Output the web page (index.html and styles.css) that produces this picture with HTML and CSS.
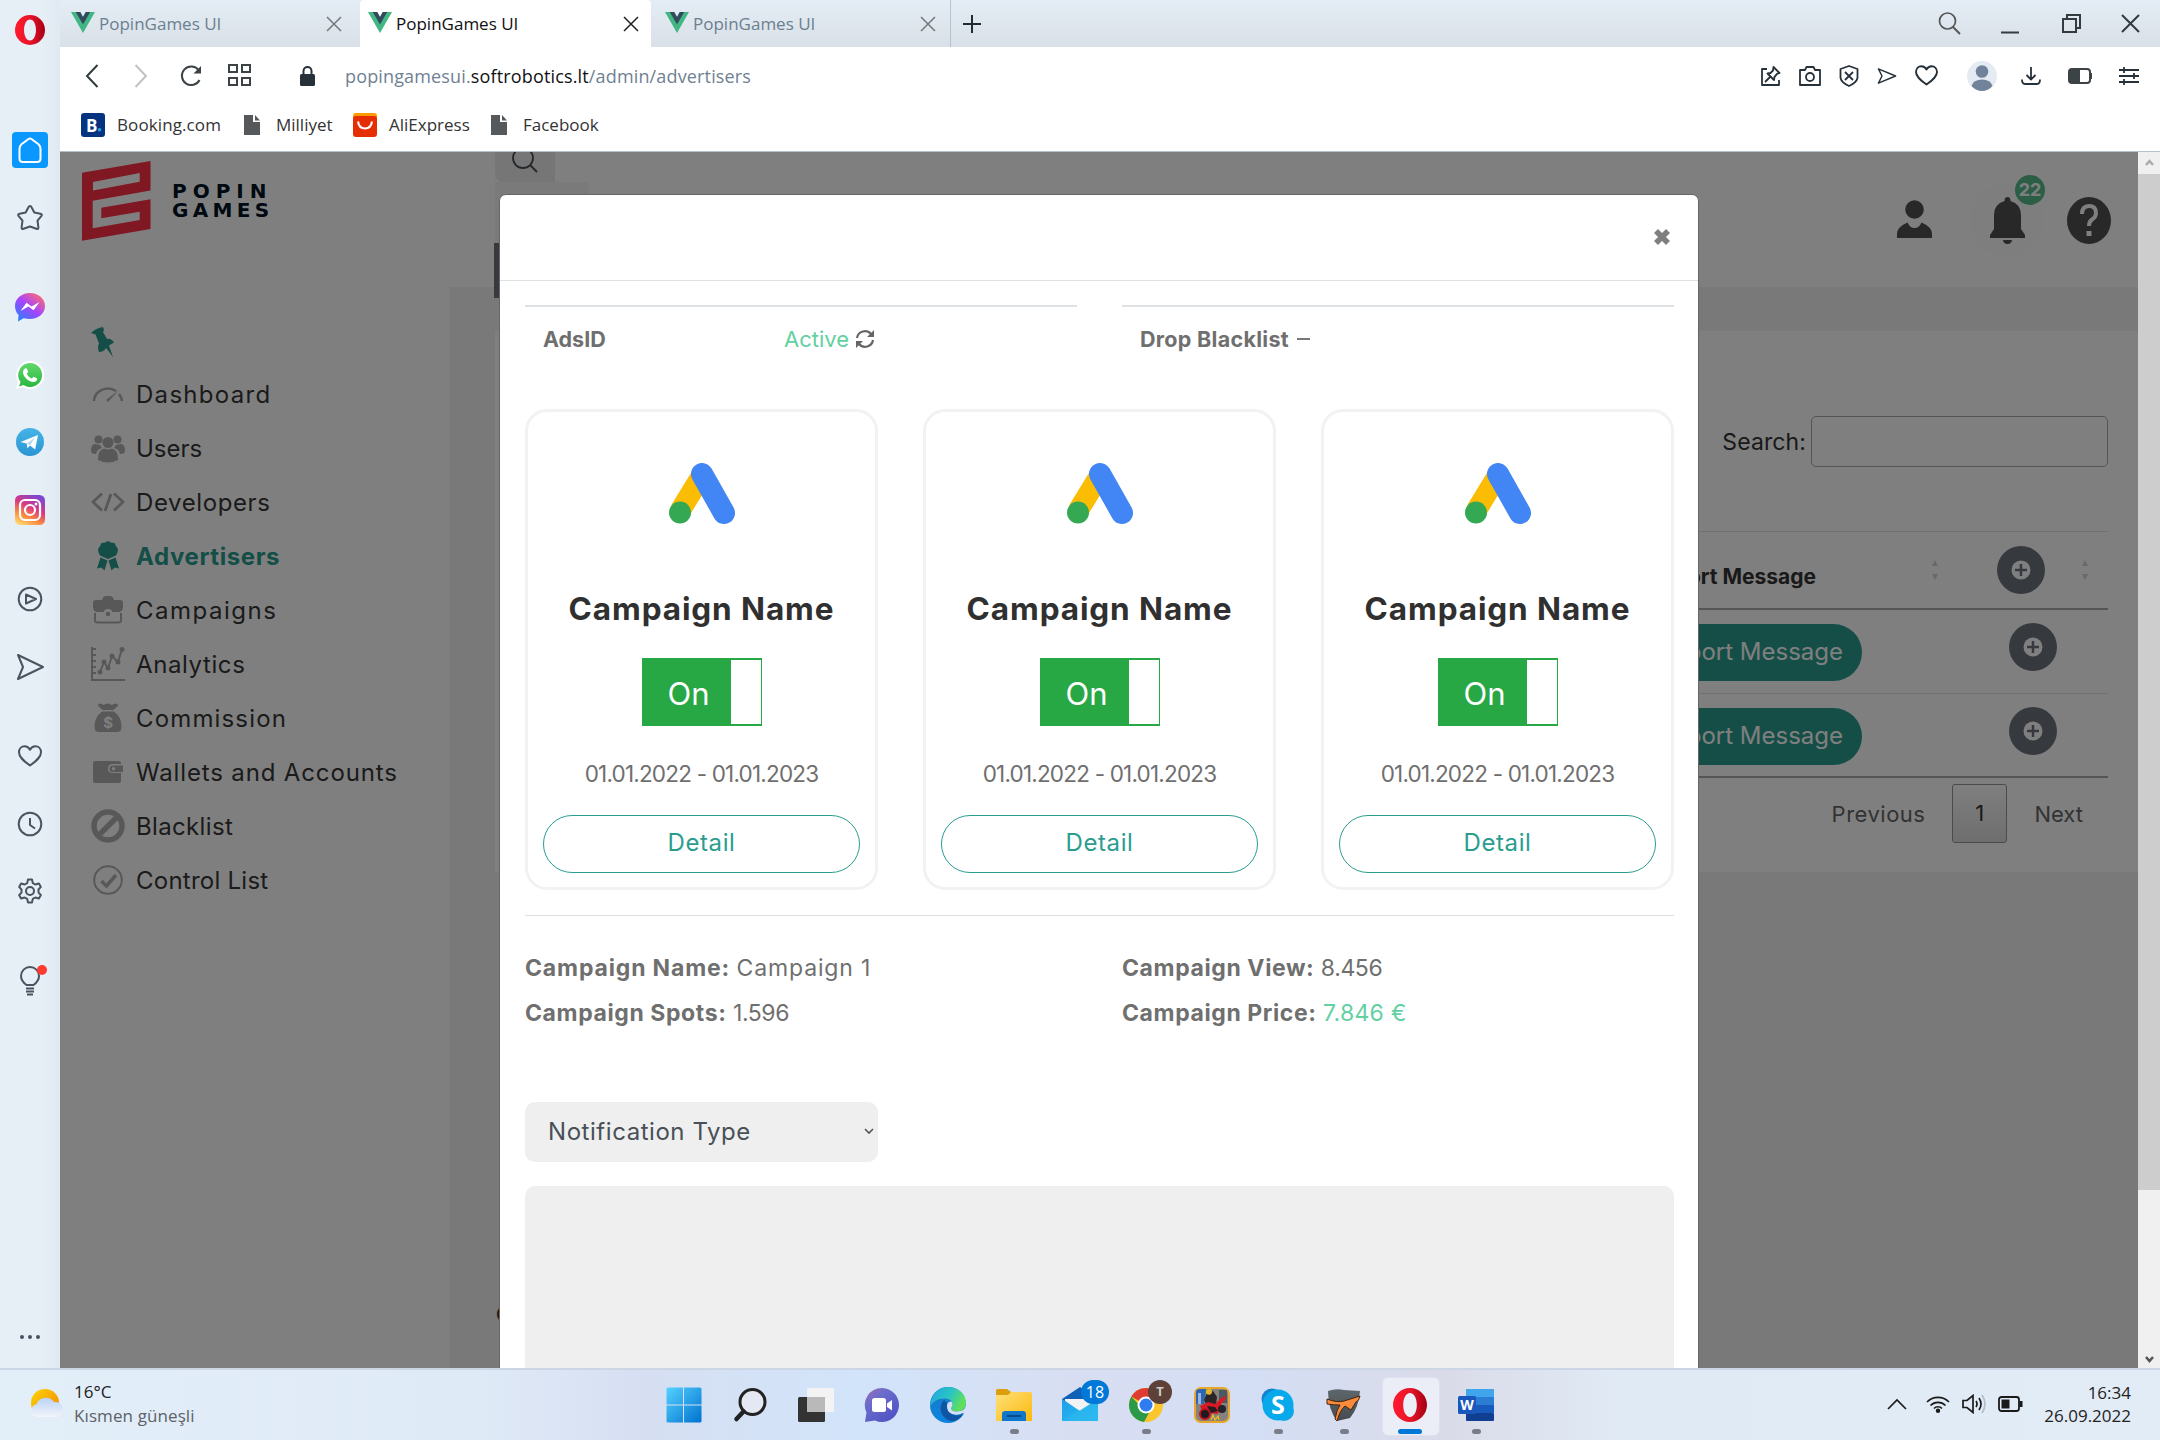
FILE: index.html
```html
<!DOCTYPE html>
<html lang="tr">
<head>
<meta charset="utf-8">
<title>PopinGames UI</title>
<link rel="stylesheet" href="styles.css">
</head>
<body>
<svg class="defs" width="0" height="0">
  <defs>
    <linearGradient id="opera-a" x1="0" x2="1"><stop offset="0" stop-color="#ff1b2d"/><stop offset=".5" stop-color="#e8142a"/><stop offset="1" stop-color="#a70014"/></linearGradient>
    <linearGradient id="msg" x1="0" y1="1" x2=".8" y2="0"><stop offset="0" stop-color="#0f8cff"/><stop offset=".55" stop-color="#a544ff"/><stop offset="1" stop-color="#ff6b74"/></linearGradient>
    <linearGradient id="wa" x2="0" y2="1"><stop offset="0" stop-color="#61d86b"/><stop offset="1" stop-color="#2bb741"/></linearGradient>
    <linearGradient id="tg" x2="0" y2="1"><stop offset="0" stop-color="#45b4e6"/><stop offset="1" stop-color="#2b95d3"/></linearGradient>
    <linearGradient id="ig" x1=".2" y1="1" x2=".7" y2="0"><stop offset="0" stop-color="#ffd86e"/><stop offset=".3" stop-color="#fb8a3e"/><stop offset=".6" stop-color="#dd3880"/><stop offset="1" stop-color="#7a46d4"/></linearGradient>
    <linearGradient id="win" x2="1" y2="1"><stop offset="0" stop-color="#55d2ff"/><stop offset="1" stop-color="#0072d0"/></linearGradient>
    <linearGradient id="chat" x2=".8" y2="1"><stop offset="0" stop-color="#a06bb0"/><stop offset=".35" stop-color="#6c6ccc"/><stop offset="1" stop-color="#4d52c4"/></linearGradient>
    <linearGradient id="edge-t" x2="1" y2=".4"><stop offset="0" stop-color="#1ea5e8"/><stop offset=".6" stop-color="#2cc5c0"/><stop offset="1" stop-color="#5fe05a"/></linearGradient>
    <linearGradient id="edge-b" x2="0" y2="1"><stop offset="0" stop-color="#1b79c8"/><stop offset="1" stop-color="#0c84dd"/></linearGradient>
    <linearGradient id="fold" x2="1" y2="1"><stop offset="0" stop-color="#ffe07a"/><stop offset="1" stop-color="#fbb90c"/></linearGradient>
    <linearGradient id="sun" x2="1" y2="1"><stop offset="0" stop-color="#ffd400"/><stop offset="1" stop-color="#ef8300"/></linearGradient>
    <linearGradient id="cloud" x2="0" y2="1"><stop offset="0" stop-color="#b9d2f5"/><stop offset="1" stop-color="#f3f5f9"/></linearGradient>
    <linearGradient id="sky" x2="1" y2="1"><stop offset="0" stop-color="#1b9fe8"/><stop offset="1" stop-color="#2dbdf2"/></linearGradient>
    <linearGradient id="shield" x2="0" y2="1"><stop offset="0" stop-color="#5d676b"/><stop offset="1" stop-color="#474b4f"/></linearGradient>
    <symbol id="vue" viewBox="0 0 24 21"><path d="M0 0h9.2L12 4.9 14.800 0H24L12 21z" fill="#41b883"/><path d="M4.800 0h4.400L12 4.900 14.800 0h4.400L12 12.500z" fill="#35495e"/></symbol>
    <symbol id="x" viewBox="0 0 16 16"><path d="M1 1l14 14M15 1L1 15" fill="none" stroke="currentColor" stroke-width="1.500"/></symbol>
    <symbol id="opera" viewBox="0 0 30 30"><path fill="url(#opera-a)" fill-rule="evenodd" d="M15 0a15 15 0 1 0 0 30a15 15 0 1 0 0-30zM15 4.500c3.600 0 6 4.700 6 10.500s-2.400 10.500-6 10.500S9 20.800 9 15s2.400-10.500 6-10.500z"/></symbol>
    <symbol id="ads" viewBox="0 0 66 61"><path d="M11 48L33 12" stroke="#fbbc04" stroke-width="21"/><path d="M33 11L55 50" stroke="#4285f4" stroke-width="22" stroke-linecap="round"/><circle cx="11" cy="49.500" r="11" fill="#34a853"/></symbol>
    <symbol id="plus" viewBox="0 0 48 48"><circle cx="24" cy="24" r="24" fill="#6c757d"/><circle cx="24" cy="24" r="9.500" fill="#fff"/><path d="M24 18v12M18 24h12" stroke="#6c757d" stroke-width="2.500"/></symbol>
    <symbol id="sort" viewBox="0 0 8 20"><path d="M4 0l3 6H1zM4 20l3-6H1z" fill="#d2d2d2"/></symbol>
    <symbol id="send" viewBox="0 0 28 24"><path d="M2 2l24 10L2 22l5-10z" fill="none" stroke="currentColor" stroke-width="2" stroke-linejoin="round"/></symbol>
    <symbol id="heart" viewBox="0 0 24 22"><path d="M12 20.500C5 15.500 1 12 1 7.300 1 3.800 3.500 1.300 6.600 1.300c2.300 0 4.200 1.200 5.400 3.400 1.200-2.200 3.100-3.400 5.400-3.400 3.100 0 5.600 2.500 5.600 6 0 4.700-4 8.200-11 13.200z" fill="none" stroke="currentColor" stroke-width="2" stroke-linejoin="round"/></symbol>
  </defs>
</svg>

<div class="screen">
  <aside class="opera-bar">
    <svg class="o-ico" viewBox="-3 -3 36 36"><use href="#opera" width="30" height="30"/></svg>
    <svg class="o-ico gap-home" viewBox="0 0 36 36"><rect width="36" height="36" rx="4" fill="#0a98ff"/><path d="M7.500 17q0-3 2-4.700l7-5.300q1.500-1 3 0l7 5.300q2 1.700 2 4.700v9.500q0 3.500-3.500 3.500H11q-3.500 0-3.500-3.500z" fill="none" stroke="#fff" stroke-width="2"/></svg>
    <svg class="o-ico gap-s" viewBox="0 0 36 36"><path d="M18 6q1 0 1.700 1.500l2.600 5 6 1.200q2.500.6 1 2.500l-3.800 4.500.9 6.600q.1 2.300-2 1.500L18 26.500l-6.400 2.300q-2.100.8-2-1.500l.9-6.600-3.800-4.500q-1.500-1.900 1-2.500l6-1.200 2.600-5Q17 6 18 6z" class="o-line"/></svg>
    <svg class="o-ico gap-l" viewBox="0 0 36 36"><path d="M18 4C9.500 4 3 9.600 3 17c0 3.600 1.300 6.700 3.600 9L6 32.500l5.600-3.300q3 .8 6.400.8c8.500 0 15-5.600 15-13S26.500 4 18 4z" fill="url(#msg)"/><path d="M8.500 22l6-8.300 5 3.700 8-4.400-6 8.300-5-3.800z" fill="#fff"/></svg>
    <svg class="o-ico gap-s" viewBox="0 0 36 36"><path d="M18 4a14 14 0 1 1-7 26l-7 2 2-7A14 14 0 0 1 18 4z" fill="#fff"/><path d="M18 6a12 12 0 1 1-6.500 22L7 29.500 8.500 25A12 12 0 0 1 18 6z" fill="url(#wa)"/><path d="M13 11.500q1.500-1 2.200.8l1 2.400-1.500 2q1.800 3.500 5 4.800l2-1.800 3.300 1.600c.8 3-2.500 4.200-4.500 3.700-5-1.200-8.600-4.900-9.500-9-.2-2 .7-3.600 2-4.500z" fill="#fff"/></svg>
    <svg class="o-ico gap-s" viewBox="0 0 36 36"><circle cx="18" cy="18" r="14" fill="url(#tg)"/><path d="M8.500 18L26 11l-2.800 14.500-5.200-4-2.500 2.800-.8-4.800z" fill="#fff"/><path d="M14.700 19.500l8.300-6-5 8" fill="#b9d9ee"/></svg>
    <svg class="o-ico gap-s" viewBox="0 0 36 36"><rect x="3" y="3" width="30" height="30" rx="5.500" fill="url(#ig)"/><rect x="8" y="8" width="20" height="20" rx="5" fill="none" stroke="#fff" stroke-width="2.200"/><circle cx="18" cy="18" r="5" fill="none" stroke="#fff" stroke-width="2.200"/><circle cx="24" cy="12" r="1.500" fill="#fff"/></svg>
    <svg class="o-ico gap-l" viewBox="0 0 36 36"><circle cx="18" cy="18" r="11.300" class="o-line"/><path d="M14 13.500l10 4.500-10 4.500z" class="o-line"/></svg>
    <svg class="o-ico gap-s" viewBox="0 0 36 36"><path d="M6 6l25 12L6 30l5-12z" class="o-line"/></svg>
    <svg class="o-ico gap-l" viewBox="-6 -7 36 36"><use href="#heart" width="24" height="22"/></svg>
    <svg class="o-ico gap-s" viewBox="0 0 36 36"><circle cx="18" cy="18" r="11.300" class="o-line"/><path d="M18 12v7l5 3.500" class="o-line"/></svg>
    <svg class="o-ico gap-s" viewBox="0 0 36 36"><path d="M16 6.500h4l.8 3.600 2.500 1.400 3.600-1 2 3.400-2.400 2.600v3l2.400 2.600-2 3.400-3.600-1-2.500 1.400-.8 3.600h-4l-.8-3.600-2.500-1.400-3.600 1-2-3.400 2.400-2.600v-3l-2.400-2.600 2-3.400 3.600 1 2.500-1.400z" class="o-line"/><circle cx="18" cy="18" r="4" class="o-line"/></svg>
    <svg class="o-ico gap-l" viewBox="0 0 36 36"><path d="M14.500 22q-5.500-4-5.500-9a9 9 0 0 1 18 0q0 5-5.500 9z" class="o-line"/><path d="M14 25.500h8M14 28.500h8M15 31.500h6" class="o-line"/><circle cx="30" cy="7" r="5" fill="#ff3b30"/></svg>
    <svg class="o-ico gap-dots" viewBox="0 0 36 36"><g fill="#4a5360"><circle cx="10" cy="18" r="2"/><circle cx="18" cy="18" r="2"/><circle cx="26" cy="18" r="2"/></g></svg>
  </aside>

  <header class="tabs">
    <div class="tab"><svg class="vue"><use href="#vue"/></svg><span>PopinGames UI</span><svg class="tab-x"><use href="#x"/></svg></div>
    <div class="tab active"><svg class="vue"><use href="#vue"/></svg><span>PopinGames UI</span><svg class="tab-x"><use href="#x"/></svg></div>
    <div class="tab"><svg class="vue"><use href="#vue"/></svg><span>PopinGames UI</span><svg class="tab-x"><use href="#x"/></svg></div>
    <svg class="new-tab" viewBox="0 0 18 18"><path d="M9 0v18M0 9h18" stroke="#222c30" stroke-width="2"/></svg>
    <div class="win-buttons">
      <svg width="23" height="23" viewBox="0 0 23 23"><circle cx="9.500" cy="9" r="8" fill="none" stroke="#555" stroke-width="1.700"/><path d="M15 15l7 7" stroke="#555" stroke-width="1.900"/></svg>
      <svg width="18" height="20" viewBox="0 0 18 20"><path d="M0 18.500h18" stroke="#333b3f" stroke-width="2"/></svg>
      <svg width="19" height="19" viewBox="0 0 19 19"><path d="M1 5h13v13H1zM5 5V1h13v13h-4" fill="none" stroke="#333b3f" stroke-width="2"/></svg>
      <svg width="19" height="19" viewBox="0 0 19 19"><path d="M1 1l17 17M18 1L1 18" stroke="#333b3f" stroke-width="2"/></svg>
    </div>
  </header>

  <section class="toolbar">
    <div class="address">
      <svg class="nav-back" width="14" height="24" viewBox="0 0 14 24"><path d="M12.500 1L2 12l10.500 11" fill="none" stroke="#333b3f" stroke-width="2"/></svg>
      <svg class="nav-fwd" width="14" height="24" viewBox="0 0 14 24"><path d="M1.500 1L12 12 1.500 23" fill="none" stroke="#bfc3c5" stroke-width="2"/></svg>
      <svg class="nav-reload" width="22" height="22" viewBox="0 0 22 22"><path d="M18.500 5A9.300 9.300 0 1 0 19.500 15" fill="none" stroke="#3c4347" stroke-width="2"/><path d="M21 1v7.500h-7.500z" fill="#3c4347"/></svg>
      <svg class="nav-grid" width="23" height="23" viewBox="0 0 23 23"><path d="M1 1h8v7H1zM14 1h8v7h-8zM1 14h8v7H1zM14 14h8v7h-8z" fill="none" stroke="#3c4347" stroke-width="2"/></svg>
      <svg class="lock" width="15" height="20" viewBox="0 0 15 20"><rect y="8" width="15" height="12" rx="1.500" fill="#26313a"/><path d="M3.500 9V5a4 4 0 0 1 8 0v4" fill="none" stroke="#26313a" stroke-width="2"/></svg>
      <span class="url">popingamesui.<b>softrobotics.lt</b>/admin/advertisers</span>
      <div class="tools">
        <svg width="20" height="20" viewBox="0 0 20 20" class="t-line"><path d="M6 3H1v16h17v-5" /><path d="M12.500 1l6 6-2.500.8-2.500 3-.5 3.200-6.500-6.500 3-.5 2.500-2.500zM9 11l-5 5"/></svg>
        <svg width="22" height="20" viewBox="0 0 22 20" class="t-line"><path d="M1 4h5l1.500-3h7L16 4h5v15H1z"/><circle cx="11" cy="11" r="4"/></svg>
        <svg width="20" height="22" viewBox="0 0 20 22" class="t-line"><path d="M10 1l8.500 3v9q-1 4.500-8.500 8-7.500-3.500-8.500-8V4z"/><path d="M6 7l8 8M14 7l-8 8"/></svg>
        <svg width="20" height="20" class="c-dark"><use href="#send"/></svg>
        <svg width="23" height="21" class="c-dark"><use href="#heart"/></svg>
        <svg class="avatar" width="30" height="30" viewBox="0 0 30 30"><circle cx="15" cy="15" r="15" fill="#e4ebf3"/><circle cx="15" cy="10.500" r="6.300" fill="#71839a"/><path d="M4.500 25Q6.500 18.500 15 18.500T25.500 25Q21 30 15 30T4.500 25z" fill="#71839a"/></svg>
        <svg width="20" height="18" viewBox="0 0 20 18" class="t-line"><path d="M10 0v12M5.500 8l4.500 4.500L14.500 8M1 12.500q0 4.500 3 4.500h12q3 0 3-4.500"/></svg>
        <svg width="24" height="16" viewBox="0 0 24 16"><rect x="1" y="1" width="21" height="14" rx="3" fill="none" stroke="#3c4347" stroke-width="2"/><rect x="1" y="1" width="11" height="14" fill="#3c4347"/><path d="M23 5v6" stroke="#3c4347" stroke-width="2"/></svg>
        <svg width="20" height="18" viewBox="0 0 20 18" class="t-line"><path d="M0 3h20M0 9h20M0 15h20M5 0v6M15 6v6M5 12v6"/></svg>
      </div>
    </div>
    <nav class="bookmarks">
      <svg width="24" height="24" viewBox="0 0 24 24"><rect width="24" height="24" rx="3" fill="#063380"/><text x="5" y="18.500" class="bk-b">B</text><circle cx="18.500" cy="16.800" r="1.800" fill="#1fa4e8"/></svg><span class="bm-1">Booking.com</span>
      <svg width="16" height="20" viewBox="0 0 16 20"><path d="M0 0h9v7h7v13H0zM11 0l5 5.500h-5z" fill="#55595b"/></svg><span class="bm-2">Milliyet</span>
      <svg width="24" height="24" viewBox="0 0 24 24"><rect width="24" height="20" rx="3" fill="#ff9900"/><rect y="3" width="24" height="21" rx="3" fill="#e62e04"/><path d="M5 8.500q1 7 7 7t7-7" fill="none" stroke="#fff" stroke-width="2"/></svg><span class="bm-3">AliExpress</span>
      <svg width="16" height="20" viewBox="0 0 16 20"><path d="M0 0h9v7h7v13H0zM11 0l5 5.500h-5z" fill="#55595b"/></svg><span class="bm-4">Facebook</span>
    </nav>
  </section>

  <main class="viewport">
    <div class="app">
      <aside class="side">
        <div class="brand">
          <svg width="69" height="80" viewBox="0 0 69 80"><path fill="#ff3146" fill-rule="evenodd" d="M0 11.700L68.500 0v29.500L10.700 39.700v27.600L57.700 59v-8.300L19.300 57.300V46.700L68.500 38.300V68L0 79.700zM11 21v8.500l46.700-8.800V12z"/></svg>
          <div class="brand-text"><div class="b1">POPIN</div><div>GAMES</div></div>
        </div>
        <svg class="pin" viewBox="0 0 24 30"><path d="M0 6Q5 1 12 0l1 3-1 2 4 7q4-1 7 3.500l-5 3 4 11.500-7-9q-2 4-7 4-2-5 0-8.500L4.500 7.500z" fill="#2a9d8f"/></svg>
        <ul class="menu">
          <li><svg viewBox="0 0 34 34"><path d="M3 24A14 13 0 0 1 25 14M28 17q2.500 3 3 7" fill="none" stroke="currentColor" stroke-width="2.500"/><path d="M28 13L17 25l-2-2z" fill="currentColor"/></svg>Dashboard</li>
          <li><svg viewBox="0 0 34 34" fill="currentColor"><circle cx="17" cy="11.500" r="5.500"/><circle cx="7.500" cy="8.500" r="4"/><circle cx="26.500" cy="8.500" r="4"/><path d="M7 29q0-11 6.500-11.500 3.500 1.800 7 0Q27 18 27 29q-10 5-20 0zM0 20q0-7 4-7l5 1 2 3q-5 1-6 6-5 0-5-3zM34 20q0-7-4-7l-5 1-2 3q5 1 6 6 5 0 5-3z"/></svg>Users</li>
          <li><svg viewBox="0 0 34 34"><path d="M11 8.500L2 17l9 8.500M23 8.500l9 8.500-9 8.500M20 9l-6 17" fill="none" stroke="currentColor" stroke-width="2.800"/></svg>Developers</li>
          <li class="on"><svg viewBox="0 0 34 34" fill="currentColor"><path d="M17 2l3 1.500 3.500.5 1.500 3 2 3-.5 3.500-1.500 3-3.500 1.500L17 20l-4.500-2L9 16.500l-1.500-3L7 10l2-3 1.500-3 3.500-.5zM9.500 18.500l7 3-3 10-3-3-4.500 1zM24.500 18.500l-7 3 3 10 3-3 4.500 1z"/></svg>Advertisers</li>
          <li><svg viewBox="0 0 34 34"><path d="M2 10q0-3 3-3h6q1-4 4-4h4q3 0 4 4h6q3 0 3 3v4q0 5-5 5h-6q0-3-4-3t-4 3H7q-5 0-5-5z" fill="currentColor"/><path d="M4 20v7q0 2.500 2.500 2.500h21Q30 29.500 30 27v-7" fill="none" stroke="currentColor" stroke-width="2"/><circle cx="17" cy="21" r="2.300" fill="currentColor"/></svg>Campaigns</li>
          <li><svg viewBox="0 0 34 34"><path d="M1 0v33h33M1 2h4M1 8h4M1 14h4M1 20h4M1 26h4M9 25l4-10 4 6 4-12 6 6 4-13" fill="none" stroke="currentColor" stroke-width="2"/><g fill="currentColor"><circle cx="9" cy="25" r="2.500"/><circle cx="13" cy="15" r="2.500"/><circle cx="17" cy="21" r="2.500"/><circle cx="21" cy="9" r="2.500"/><circle cx="27" cy="15" r="2.500"/><circle cx="31" cy="2.500" r="2.500"/></g></svg>Analytics</li>
          <li><svg viewBox="0 0 34 34" fill="currentColor"><path d="M6.500 4q3-3 6 0 4-3 8.500 0 3-3 6.500 0l-5 5h-11zM11 10.500h12q8 6 7.500 15.500 0 5-4.500 5H8q-4.500 0-4.500-5Q3 16.500 11 10.500z"/><text x="12.300" y="27" font-size="15" font-weight="700" fill="#fff">$</text></svg>Commission</li>
          <li><svg viewBox="0 0 34 34" fill="currentColor"><path d="M2 8q0-2 2-2h23q3 0 3 2v1h-8q-5 0-5 4.500T22 18h8v8q0 2-2 2H4q-2 0-2-2z"/><path fill-rule="evenodd" d="M22 10.500h10V17H22q-3.500 0-3.500-3.200t3.500-3.300zm.5 1.600a1.700 1.700 0 1 0 .1 3.400 1.700 1.700 0 0 0-.1-3.400z"/></svg>Wallets and Accounts</li>
          <li><svg viewBox="0 0 34 34"><circle cx="17" cy="17" r="14" fill="none" stroke="currentColor" stroke-width="5.500"/><path d="M8 26L26 8" stroke="currentColor" stroke-width="5.500"/></svg>Blacklist</li>
          <li><svg viewBox="0 0 34 34"><circle cx="17" cy="17" r="13.800" fill="none" stroke="currentColor" stroke-width="2"/><path d="M10.500 18l5 5L25 12" fill="none" stroke="currentColor" stroke-width="3.500"/></svg>Control List</li>
        </ul>
      </aside>
      <div class="content">
        <div class="top">
          <div class="top-left">
            <div class="find"><svg width="26" height="26" viewBox="0 0 26 26"><circle cx="11" cy="11" r="10" fill="none" stroke="#495057" stroke-width="1.800"/><path d="M18 18l7 7" stroke="#495057" stroke-width="2"/></svg></div>
            <div class="find-tail"></div>
            <div class="dark-btn"></div>
          </div>
          <div class="top-icons">
            <svg class="u" viewBox="0 0 35 38" fill="#505050"><circle cx="17.500" cy="9.500" r="9.300"/><path d="M0 38v-4q0-7 10.500-11.500Q13 28 17.500 28t7-5.500Q35 27 35 34v4z"/></svg>
            <div class="bell"><svg viewBox="0 0 35 47" fill="#505050"><path d="M14.500 4q0-4 3-4t3 4Q31 7 31 18v14l4 6v3H0v-3l4-6V18Q4 7 14.500 4zM13 43h9q-.5 4-4.500 4T13 43z"/></svg><span class="badge">22</span></div>
            <svg class="q" viewBox="0 0 44 47"><ellipse cx="22" cy="23.500" rx="22" ry="23.500" fill="#505050"/><path d="M15 17q0-8 7-8t7 7q0 4-4 6.500-3 2-3 6.500" fill="none" stroke="#fff" stroke-width="4"/><rect x="19.500" y="34" width="5" height="5" fill="#fff"/></svg>
          </div>
        </div>
        <div class="panel">
          <label class="search">Search:<span class="search-box"></span></label>
          <div class="thead"><span class="th">Support Message</span><svg class="sort s1"><use href="#sort"/></svg><svg class="plus"><use href="#plus"/></svg><svg class="sort s2"><use href="#sort"/></svg></div>
          <div class="trow"><span class="pill">Support Message</span><svg class="plus"><use href="#plus"/></svg></div>
          <div class="trow last"><span class="pill">Support Message</span><svg class="plus"><use href="#plus"/></svg></div>
          <div class="pager"><span>Previous</span><span class="cur">1</span><span class="next">Next</span></div>
        </div>
        <div class="foot">©</div>
      </div>
    </div>
    <div class="shade"></div>
    <div class="modal">
      <div class="m-head"><svg width="18" height="18" viewBox="0 0 18 18"><path d="M3 3l12 12M15 3L3 15" stroke="#7f7f7f" stroke-width="5.600"/></svg></div>
      <div class="m-body">
        <div class="two">
          <div class="bar"><b class="ads-id">AdsID</b><span class="active-t">Active</span><svg width="20" height="20" viewBox="0 0 20 20"><path d="M2 9a8 8 0 0 1 14-4M18 11a8 8 0 0 1-14 4" fill="none" stroke="#666" stroke-width="2.200"/><path d="M19 1v7h-7zM1 19v-7h7z" fill="#666"/></svg></div>
          <div class="bar"><b class="drop">Drop Blacklist</b><i class="dash"></i></div>
        </div>
        <div class="cards">
          <article class="card"><svg class="ads"><use href="#ads"/></svg><h3>Campaign Name</h3><div class="toggle"><span>On</span><i></i></div><p>01.01.2022 - 01.01.2023</p><div class="detail">Detail</div></article>
          <article class="card"><svg class="ads"><use href="#ads"/></svg><h3>Campaign Name</h3><div class="toggle"><span>On</span><i></i></div><p>01.01.2022 - 01.01.2023</p><div class="detail">Detail</div></article>
          <article class="card"><svg class="ads"><use href="#ads"/></svg><h3>Campaign Name</h3><div class="toggle"><span>On</span><i></i></div><p>01.01.2022 - 01.01.2023</p><div class="detail">Detail</div></article>
        </div>
        <div class="info">
          <div><b class="wide">Campaign Name:</b> <span class="wide">Campaign 1</span></div><div><b>Campaign View:</b> <span class="num">8.456</span></div>
          <div><b>Campaign Spots:</b> <span class="num">1.596</span></div><div><b>Campaign Price:</b> <span class="green">7.846 €</span></div>
        </div>
        <div class="select">Notification Type<svg width="10" height="7" viewBox="0 0 10 7"><path d="M1 1l4 4 4-4" fill="none" stroke="#555" stroke-width="1.600"/></svg></div>
        <div class="area"></div>
      </div>
    </div>
    <div class="scroll"><svg width="22" height="22" viewBox="0 0 22 22"><path d="M8 13l3.500-4 3.500 4" fill="none" stroke="#a9a9a9" stroke-width="2.400"/></svg><div class="thumb"></div><svg width="22" height="18" viewBox="0 0 22 18"><path d="M8 7l3.500 4L15 7" fill="none" stroke="#555" stroke-width="2.600"/></svg></div>
  </main>

  <footer class="taskbar">
    <div class="weather">
      <svg width="34" height="30" viewBox="0 0 34 30"><circle cx="15" cy="14" r="14" fill="url(#sun)"/><path d="M7 28a6.500 6.500 0 0 1-.5-12.800A10 10 0 0 1 24 13a7.500 7.500 0 0 1 2.500 15z" fill="url(#cloud)"/></svg>
      <div><div class="w1">16°C</div><div class="w2">Kısmen güneşli</div></div>
    </div>
    <div class="apps">
      <div class="app-i"><svg viewBox="0 0 36 36" fill="url(#win)"><path d="M.5 2q0-1.500 1.500-1.500h15v17H.5zM18 .5h16q1.500 0 1.500 1.500v15.500H18zM.5 18.500h16.500v17H2q-1.500 0-1.500-1.500zM18 18.500h17.500V34q0 1.500-1.500 1.500H18z"/></svg></div>
      <div class="app-i"><svg viewBox="0 0 36 36"><circle cx="20.500" cy="15" r="12.500" fill="#e4e8f2" stroke="#222" stroke-width="3"/><path d="M11.500 24.500L4.500 32" stroke="#222" stroke-width="4.500" stroke-linecap="round"/></svg></div>
      <div class="app-i"><svg viewBox="0 0 36 36"><rect x="0" y="10" width="27" height="25" rx="1.500" fill="#333"/><rect x="9" y="1" width="27" height="24" rx="1.500" fill="#f3f3f3"/><path d="M9 10h18v15H10.500Q9 25 9 23.500z" fill="#b9b9b9"/></svg></div>
      <div class="app-i"><svg viewBox="0 0 36 36"><path d="M18 1a17 17 0 1 1-7 32.500L1 35l1.500-9.500A17 17 0 0 1 18 1z" fill="url(#chat)"/><rect x="8" y="11" width="14" height="14" rx="2.500" fill="#fff"/><path d="M23 16.500l5-3.500v10.500L23 20z" fill="#fff"/></svg></div>
      <div class="app-i"><svg viewBox="0 0 36 36"><circle cx="18" cy="18" r="18" fill="url(#edge-b)"/><path d="M1 14C4 4 11 0 18 0c11 0 18 7 18 16 0 6-5 8.500-9 8.500-5 0-6.500-2-5.500-4 3-5-1-9-6-9C8 11 3 14 0 20z" fill="url(#edge-t)"/><path d="M14 13c-7 8-2 18 6 21 6 1 11-3 13-7-8 4-18-1-16-11z" fill="#0e56a5"/><path d="M36 18q-1 6.500-9 6.500c-5 0-6.500-2-5.500-4q2-3 0-6-4 0-4.500 4-.5 6 5 8.500 6 2 11-1l3 2z" fill="#d7dff2"/></svg></div>
      <div class="app-i run"><svg viewBox="0 0 36 36"><path d="M0 4q0-2 2-2h9l4 3v6H0z" fill="#dc9e0a"/><path d="M0 8h12l3-3h19q2 0 2 2v27H0z" fill="url(#fold)"/><path d="M6 34V27q0-3 3-3h18q3 0 3 3v7z" fill="#0f76ca"/><path d="M11 29h14" stroke="#0b4a86" stroke-width="2"/></svg></div>
      <div class="app-i"><svg viewBox="0 0 36 36"><path d="M0 12L18 0l18 12v10H0z" fill="#1061b5"/><path d="M3 12h30v3l-15 10L3 14z" fill="#f2f3f5"/><path d="M0 12l18 12 18-12v22H0z" fill="url(#sky)"/><path d="M0 34l36-22v22z" fill="#2fb8ef" opacity=".6"/></svg><span class="b18">18</span></div>
      <div class="app-i run"><svg viewBox="0 0 36 36"><circle cx="18" cy="18" r="17" fill="#fbc52c"/><path d="M18 18L3.300 9.500A17 17 0 0 1 32.700 9.500z" fill="#de3c30"/><path d="M3.300 9.500A17 17 0 0 0 16 35l6-11-8-3z" fill="#2a9a48"/><circle cx="18" cy="18" r="8.500" fill="#fff"/><circle cx="18" cy="18" r="6.500" fill="#2f7cf0"/></svg><span class="bt">T</span></div>
      <div class="app-i"><svg viewBox="0 0 36 36"><rect x="1" y="1" width="34" height="34" rx="6" fill="#85817c" stroke="#e9a629" stroke-width="2"/><path d="M2 5q0-3 4-3h6l-2 15H2z" fill="#2c65b5"/><path d="M4 6h3v11H4z" fill="#9db7d8"/><path d="M25 3h8v13h-8z" fill="#4d5960"/><path d="M13 6l6-2 4 6-1 7-9 2-3-6z" fill="#2a2629"/><circle cx="15" cy="4.800" r="3" fill="#e3b62a"/><path d="M6 19l8-4 7 2 6-6 5-2-1 4-4 4 2 5-6 5-9-1-6-3z" fill="#d81a24"/><path d="M13 19l8 1 3 4-7 2z" fill="#241c20"/><circle cx="11" cy="27" r="5" fill="#1b1b1d" stroke="#c2101b" stroke-width="2"/><circle cx="28" cy="22" r="4" fill="#252529"/><path d="M17 33l2-5 2 5 3-4 1 4" stroke="#f3c118" stroke-width="1.200" fill="none"/></svg></div>
      <div class="app-i run"><svg viewBox="0 0 36 36"><circle cx="12" cy="12" r="10.500" fill="#1183cf"/><circle cx="24" cy="24" r="10" fill="#10a6e6"/><circle cx="18" cy="18" r="15.500" fill="#07a9ea"/><text x="18" y="27" class="sk">S</text></svg></div>
      <div class="app-i run"><svg viewBox="0 0 36 36"><path d="M2 4q8-3 16-1l16 1q-1 16-10 27l-13 3Q2 22 2 4z" fill="url(#shield)"/><path d="M1 12q10 4 17 2l16-5q-1 5-4 6l-5 8-6-4q-5 4-8 15l-2-2q2-10 5-14-6 0-13-1z" fill="#fb8b3c" stroke="#43240f" stroke-width="1"/></svg></div>
      <div class="app-i focus"><svg viewBox="0 0 36 36"><use href="#opera" x="1" y="1" width="34" height="34"/></svg></div>
      <div class="app-i run"><svg viewBox="0 0 36 36"><rect x="8" y="2" width="28" height="9" fill="#41a5ee"/><rect x="8" y="10" width="28" height="8" fill="#2b7cd3"/><rect x="8" y="18" width="28" height="8" fill="#185abd"/><rect x="8" y="26" width="28" height="8" rx="1" fill="#103f91"/><rect x="0" y="9" width="18" height="18" rx="1.500" fill="#1a57bd"/><text x="9" y="22.500" class="wd">W</text></svg></div>
    </div>
    <div class="tray">
      <svg width="20" height="12" viewBox="0 0 20 12"><path d="M1 11l9-9 9 9" fill="none" stroke="#1a1a1a" stroke-width="1.600"/></svg>
      <svg class="wifi" width="24" height="18" viewBox="0 0 24 18"><path d="M1 7a15.500 15.500 0 0 1 22 0M4.500 10.500a10.500 10.500 0 0 1 15 0M8 13.500a5.500 5.500 0 0 1 8 0" fill="none" stroke="#1a1a1a" stroke-width="1.700"/><circle cx="12" cy="15.800" r="2.200" fill="#1a1a1a"/></svg>
      <svg class="spk" width="25" height="20" viewBox="0 0 25 20"><path d="M1 6.500h4l6-5v17l-6-5H1zM14 7q2 3 0 6M17 4q4 6 0 12" fill="none" stroke="#1a1a1a" stroke-width="1.700"/><path d="M20 1q6 9 0 18" fill="none" stroke="#b4bcc6" stroke-width="1.700"/></svg>
      <svg class="bat" width="25" height="16" viewBox="0 0 25 16"><rect x="1" y="1" width="20" height="14" rx="2.500" fill="none" stroke="#1a1a1a" stroke-width="1.800"/><rect x="3.500" y="3.500" width="8" height="9" fill="#1a1a1a"/><path d="M23 5v6" stroke="#1a1a1a" stroke-width="3"/></svg>
      <div class="clock">16:34<br>26.09.2022</div>
    </div>
  </footer>
</div>
</body>
</html>
```

FILE: styles.css
```css
* { box-sizing: border-box; }
body { margin: 0; font-family: "Open Sans", "Noto Sans", sans-serif; color: #222; }
.defs { position: absolute; }
svg { display: block; flex: none; }

.screen {
  width: 2160px; height: 1440px; overflow: hidden;
  display: grid; grid-template-columns: 60px 2100px; grid-template-rows: 47px 105px 1216px 72px;
  background: #e4ecf5;
}

/* browser side bar */
.opera-bar { grid-row: 1 / 4; display: flex; flex-direction: column; align-items: center; padding-top: 12px; background: linear-gradient(90deg, #e6eef6 70%, #e0e8f1); color: #4a5360; }
.o-ico { width: 36px; height: 36px; overflow: visible; }
.o-line { fill: none; stroke: #4a5360; stroke-width: 2; stroke-linejoin: round; }
.gap-home { margin-top: 84px; }
.gap-s { margin-top: 31.500px; }
.gap-l { margin-top: 53.500px; }
.gap-dots { margin-top: 320px; }

/* tabs */
.tabs { display: flex; align-items: center; background: linear-gradient(#e4ecf5, #d9e0e7); }
.tab { width: 297px; height: 47px; display: flex; align-items: center; padding: 0 15px 0 11px; color: #6c7f90; font-size: 17px; letter-spacing: 0; }
.tab span { margin-left: 4px; flex: 1; }
.tab.active { background: #fff; color: #101010; width: 291px; margin-left: 3px; padding: 0 12px 0 8px; border-radius: 4px 4px 0 0; }
.tab.active + .tab { padding-left: 14px; width: 300px; padding-right: 14px; border-right: 1px solid #b3c3d1; }
.vue { width: 24px; height: 21px; margin-bottom: 2px; }
.tab-x { width: 16px; height: 16px; color: #777; }
.active .tab-x { color: #222; }
.new-tab { width: 18px; height: 18px; margin-left: 12px; }
.win-buttons { margin-left: auto; display: flex; align-items: center; padding-right: 20px; gap: 40px; }
.win-buttons svg:nth-child(3) { margin-left: 3px; }

/* address bar and bookmarks */
.toolbar { background: #fff; border-bottom: 1px solid #b3bfcb; display: flex; flex-direction: column; }
.address { height: 57px; display: flex; align-items: center; padding: 0 21px 0 25px; }
.nav-fwd { margin-left: 35px; }
.nav-reload { margin-left: 32px; }
.nav-grid { margin-left: 26px; }
.lock { margin-left: 49px; }
.url { margin-left: 30px; font-size: 18px; letter-spacing: .15px; color: #6f8192; white-space: nowrap; }
.url b { font-weight: 400; color: #111; }
.tools { margin-left: auto; display: flex; align-items: center; gap: 18px; }
.tools .avatar { margin: 0 6px 0 11px; }
.tools svg:nth-child(n+8) { margin-left: 9px; }
.c-dark { color: #26313a; }
.t-line { fill: none; stroke: #26313a; stroke-width: 1.800; stroke-linejoin: round; }
.bookmarks { height: 41px; display: flex; align-items: center; padding-left: 21px; font-size: 17px; color: #333; white-space: nowrap; }
.bookmarks span { margin-left: 12px; }
.bm-1 { width: 115px; letter-spacing: .1px; } .bm-2 { width: 69px; } .bm-3 { width: 90px; }
.bookmarks span + svg { margin-left: 12px; }
.bm-2, .bm-4 { padding-left: 4px; }
.bk-b { font: 700 17px "Open Sans", sans-serif; fill: #fff; }

/* site */
.viewport { grid-column: 2; position: relative; overflow: hidden; display: flex; background: #fff; font-family: Inter, "Noto Sans", sans-serif; }
.app { display: flex; width: 2078px; color: #333; }
.side { width: 390px; background: #fff; padding-left: 22px; }
.brand { display: flex; padding-top: 9px; height: 157px; }
.brand-text { margin: 21px 0 0 21px; font: 700 20px/19px "DejaVu Sans", sans-serif; letter-spacing: 4.300px; color: #001122; }
.b1 { letter-spacing: 6px; }
.pin { width: 24px; height: 30px; margin: 18px 0 0 9px; }
.menu { list-style: none; margin: 10px 0 0; padding: 0 0 0 9px; font-size: 24px; letter-spacing: .6px; }
.menu li { height: 54px; display: flex; align-items: center; gap: 11px; color: #363636; white-space: nowrap; }
.menu li:nth-child(1) { letter-spacing: 1.300px; }
.menu li:nth-child(2) { letter-spacing: 0; }
.menu li:nth-child(5) { letter-spacing: 1.500px; }
.menu li:nth-child(7) { letter-spacing: 1.150px; }
.menu li:nth-child(8) { letter-spacing: .850px; }
.menu li:nth-child(9) { letter-spacing: .350px; }
.menu li:nth-child(10) { letter-spacing: .250px; }
.menu svg { width: 34px; height: 34px; color: #b0b0b0; }
.menu .on, .menu .on svg { color: #2a9d8f; }
.menu .on { font-weight: 700; }
.content { flex: 1; background: #f2f2f2; }
.top { height: 135px; background: #fff; display: flex; justify-content: space-between; padding: 0 27px 0 45px; }
.find { width: 60px; height: 30px; padding: 0 0 0 17px; background: #ededed; border-radius: 0 0 0 8px; overflow: hidden; }
.find svg { margin-top: -5px; }
.find-tail { width: 94px; height: 61px; background: #f5f5f5; }
.dark-btn { width: 100px; height: 55px; background: #6c757d; margin-left: -1px; }
.top-icons { display: flex; align-items: flex-start; }
.u { width: 35px; height: 38px; margin: 48px 38px 0 0; }
.bell { width: 74px; height: 74px; border-radius: 50%; background: #fdfdfd; margin: 31px 23px 0 0; position: relative; display: flex; justify-content: center; padding-top: 14px; }
.bell svg { width: 35px; height: 47px; }
.badge { position: absolute; left: 45px; top: -8px; width: 30px; height: 30px; border-radius: 50%; background: #58bd8c; color: #fff; font-weight: 700; font-size: 18px; line-height: 30px; text-align: center; }
.q { width: 44px; height: 47px; margin-top: 45px; }
.panel { margin: 44px 0 0 45px; height: 541px; background: #fff; padding: 85px 30px 0 24px; }
.search { display: flex; justify-content: flex-end; align-items: center; height: 51px; font-size: 23px; letter-spacing: .1px; }
.search-box { width: 297px; height: 51px; border: 1px solid #aaa; border-radius: 5px; margin-left: 5px; }
.thead { margin-top: 64px; height: 79px; border-top: 1px solid #dee2e6; border-bottom: 2px solid #aaa; display: flex; justify-content: flex-end; align-items: center; padding-right: 19px; }
.th { font-size: 21px; font-weight: 700; margin-right: 115px; padding-top: 13px; }
.sort { width: 8px; height: 20px; }
.plus { width: 48px; height: 48px; }
.thead .plus { margin: 0 36px 0 58px; }
.trow { height: 84px; display: flex; justify-content: flex-end; padding: 14px 51px 0 0; border-bottom: 1px solid #dee2e6; }
.trow .plus { margin-top: -1px; }
.trow.last { height: 84px; border-bottom: 2px solid #aaa; }
.pill { width: 230px; height: 57px; border-radius: 29px; background: #2a9d8f; color: #fff; font-size: 24px; line-height: 55px; text-align: right; padding-right: 19px; margin-right: 147px; white-space: nowrap; }
.pager { display: flex; justify-content: flex-end; align-items: center; padding: 6px 25px 0 0; font-size: 22px; color: #666; letter-spacing: .500px; }
.pager .next { letter-spacing: 0; }
.pager .cur { width: 55px; height: 59px; line-height: 57px; text-align: center; border: 1px solid #979797; border-radius: 3px; background: linear-gradient(#fff, #dcdcdc); margin: 0 27px; color: #333; }
.foot { margin: 428px 0 0 45px; font-size: 24px; }
.shade { position: absolute; inset: 0 22px 0 0; background: rgba(0, 0, 0, .5); }

/* dialog */
.modal { position: absolute; left: 439px; top: 42px; width: 1200px; height: 1300px; background: #fff; border: 1px solid #666; border-radius: 7px; color: #6f6f6f; }
.m-head { height: 86px; border-bottom: 1px solid #dee2e6; display: flex; justify-content: flex-end; padding: 33px 27px 0 0; }
.m-body { padding: 24px 24px 0 25px; }
.two { display: grid; grid-template-columns: 552px 552px; gap: 45px; }
.bar { height: 104px; border-top: 2px solid #dfe2e4; display: flex; align-items: center; padding: 0 18px 38px; font-size: 21px; }
.ads-id { width: 241px; font-size: 21.500px; }
.active-t { color: #63d0a1; margin-right: 6px; font-size: 22px; }
.drop { font-size: 21.500px; letter-spacing: .300px; }
.dash { width: 13px; height: 2px; background: #777; margin-left: 8px; }
.cards { display: grid; grid-template-columns: 353px 353px 353px; justify-content: space-between; }
.card { height: 481px; border: 3px solid #f2f2f2; border-radius: 22px; display: flex; flex-direction: column; align-items: center; padding: 51px 15px 0; }
.ads { width: 66px; height: 61px; }
.card h3 { margin: 67px 0 0; font-size: 31.500px; line-height: 36px; letter-spacing: .900px; color: #303030; white-space: nowrap; }
.toggle { margin-top: 31px; width: 120px; height: 68px; background: #28a745; color: #fff; display: flex; padding: 2px 1px 2px 0; font-size: 31px; line-height: 68px; }
.toggle span { width: 89px; padding-left: 26px; }
.toggle i { width: 30px; background: #fff; }
.card p { margin: 33px 0 0; font-size: 22.500px; line-height: 30px; letter-spacing: -.800px; white-space: nowrap; }
.detail { margin-top: 26px; width: 317px; height: 58px; border: 1px solid #2a9d8f; border-radius: 29px; color: #2a9d8f; font-size: 24px; line-height: 54px; letter-spacing: .600px; text-align: center; }
.info { margin-top: 25px; border-top: 1px solid #dedede; padding-top: 30px; display: grid; grid-template-columns: 597px 1fr; grid-auto-rows: 45px; line-height: 45px; font-size: 23px; height: 187px; }
.info b { letter-spacing: .600px; }
.info .wide { letter-spacing: .850px; }
.info .num { letter-spacing: -.400px; }
.green { color: #63d0a1; letter-spacing: .300px; }
.select { width: 353px; height: 60px; background: #efefef; border-radius: 10px; display: flex; align-items: center; justify-content: space-between; padding: 0 4px 2px 23px; font-size: 24px; letter-spacing: .550px; color: #495057; }
.area { margin-top: 24px; height: 300px; background: #efefef; border-radius: 10px; }
.scroll { width: 22px; background: #f0f0f0; display: flex; flex-direction: column; justify-content: space-between; }
.thumb { height: 1016px; background: #cdcdcd; margin-bottom: auto; }

/* task bar */
.taskbar { grid-column: 1 / 3; display: grid; grid-template-columns: 651px 858px 651px; border-top: 2px solid #ccd5e4; background: linear-gradient(90deg, #e2eef8 0, #dfeaf7 22%, #d6dff2 30%, #d2e4fa 40%, #d8def2 50%, #d4def4 58%, #dadbe9 67%, #e0eaf5 75%, #e2ecf6 100%); }
.weather { display: flex; align-items: center; padding: 0 0 2px 30px; }
.weather > div { margin-left: 10px; font-size: 17px; line-height: 24px; }
.w2 { color: #5c6268; letter-spacing: .1px; }
.apps { display: flex; }
.app-i { width: 66px; position: relative; display: flex; flex-direction: column; align-items: center; padding-top: 17px; }
.app-i svg { width: 36px; height: 36px; z-index: 1; }
.run::after { content: ""; width: 9px; height: 5px; border-radius: 3px; background: #7a7d87; margin-top: 6px; }
.focus::before { content: ""; position: absolute; left: 5px; top: 7px; width: 56px; height: 57px; background: #ebeef7; border-radius: 6px; border: 1px solid #dfe2ee; }
.focus::after { content: ""; width: 24px; height: 5px; border-radius: 3px; background: #0078d7; margin-top: 6px; z-index: 1; }
.b18, .bt { position: absolute; z-index: 2; text-align: center; }
.b18 { left: 34px; top: 10px; width: 28px; height: 24px; line-height: 24px; border-radius: 12px; background: #0078d7; color: #fff; font-size: 16px; }
.bt { left: 35px; top: 10px; width: 24px; height: 24px; line-height: 23px; border-radius: 50%; background: #5d4037; color: #ccc; font-size: 13px; font-weight: 700; }
.sk { font: 700 25px "Open Sans", sans-serif; fill: #fff; text-anchor: middle; }
.wd { font: 700 14px "Open Sans", sans-serif; fill: #fff; text-anchor: middle; }
.tray { display: flex; align-items: center; justify-content: flex-end; padding: 0 29px 2px 0; }
.wifi { margin-left: 19px; }
.spk { margin-left: 12px; }
.bat { margin-left: 11px; }
.clock { width: 108px; text-align: right; font-size: 17px; line-height: 23.500px; }
```
